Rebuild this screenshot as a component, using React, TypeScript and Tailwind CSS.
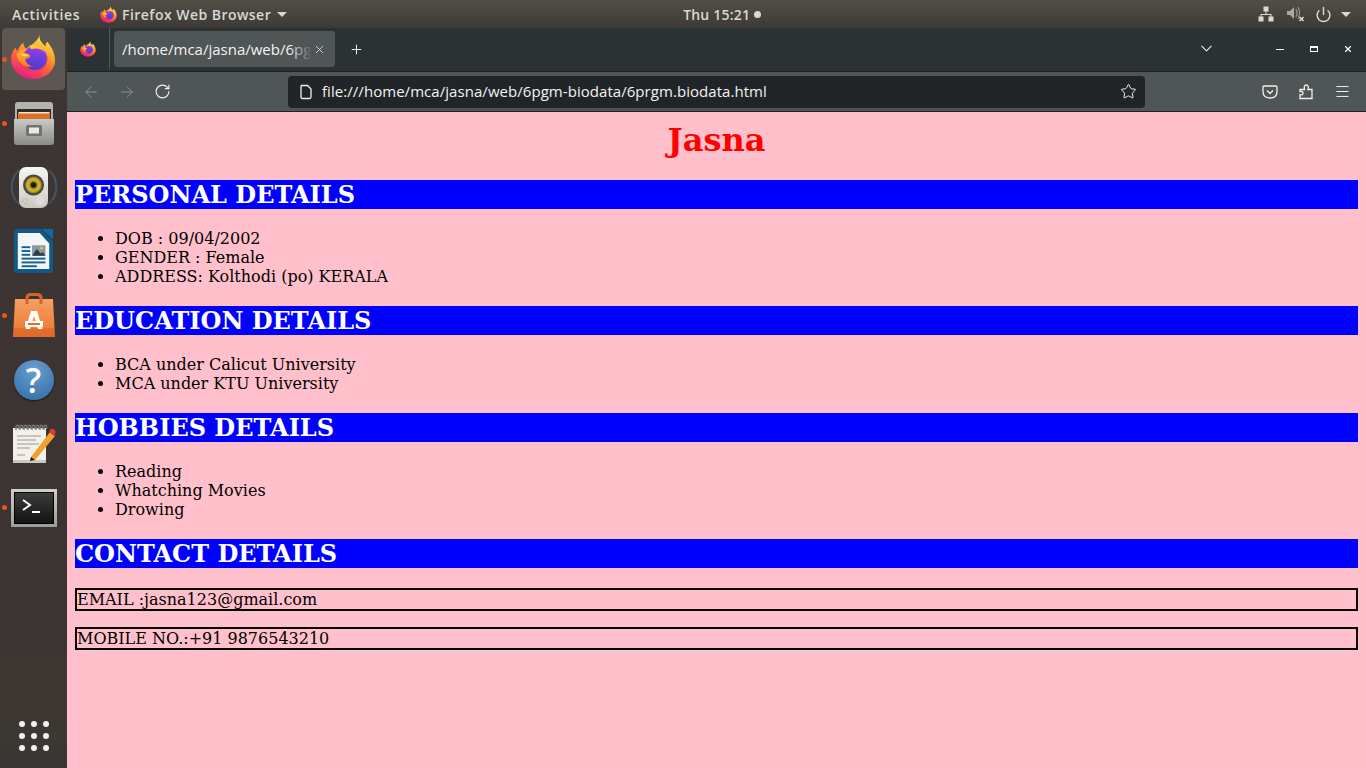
import React from "react";
import { ArrowLeft, ArrowRight, ChevronDown, Menu, Plus, Power, RotateCw, Star, X } from "lucide-react";

const uiFont = "font-['Open_Sans',sans-serif]";

function FirefoxLogo({ size, id }: { size: number; id: string }) {
    return (
        <svg width={size} height={size} viewBox="0 0 48 48">
            <defs>
                <linearGradient id={`${id}-body`} x1="0.75" y1="0" x2="0.3" y2="1">
                    <stop offset="0" stopColor="#ffe847" />
                    <stop offset="0.35" stopColor="#ffa52c" />
                    <stop offset="0.65" stopColor="#ff5a3c" />
                    <stop offset="1" stopColor="#e5178b" />
                </linearGradient>
                <linearGradient id={`${id}-globe`} x1="0.6" y1="0" x2="0.4" y2="1">
                    <stop offset="0" stopColor="#a83ae0" />
                    <stop offset="0.5" stopColor="#6b3fdc" />
                    <stop offset="1" stopColor="#4f3bc4" />
                </linearGradient>
                <linearGradient id={`${id}-fox`} x1="0" y1="0" x2="1" y2="1">
                    <stop offset="0" stopColor="#ffb52e" />
                    <stop offset="1" stopColor="#ff6a2f" />
                </linearGradient>
            </defs>
            <path
                d="M31 1C30 7 34 9 37 13C37 10 38 9 39 8C44 14 47 21 47 27C47 39 36 47 24 47C12 47 1 38 1 26C1 21 3 17 6 14C6 16 7 17 8 18C9 14 12 10 14 9C14 12 15 14 17 15C21 12 28 9 31 1Z"
                fill={`url(#${id}-body)`}
            />
            <path d="M39 22C41 31 35 40 25 40C16 40 10 34 9 27C13 35 21 38 28 36C35 34 39 29 39 22Z" fill="#f0346e" opacity="0.75" />
            <circle cx="26" cy="25" r="12.5" fill={`url(#${id}-globe)`} />
            <path d="M20 12C26 10 34 13 37 19C33 15 27 14 22 16Z" fill="#ffc933" />
            <path
                d="M7 21C11 17 15 15 18 16C16 18 15 19 15 20C18 20 21 21 21 23C21 25 18 26 16 26C16 29 19 33 24 34C18 35 11 32 9 27C8 25 7 23 7 21Z"
                fill={`url(#${id}-fox)`}
            />
            <path d="M11 21C14 20 18 21 19 22C17 24 14 24 11 21Z" fill="#ffd75e" />
        </svg>
    );
}

function FilesIcon() {
    return (
        <svg width="44" height="43" viewBox="0 0 44 43">
            <defs>
                <linearGradient id="cab" x1="0" y1="0" x2="0" y2="1">
                    <stop offset="0" stopColor="#c9c9c6" />
                    <stop offset="1" stopColor="#8a8a88" />
                </linearGradient>
            </defs>
            <path d="M3 3Q3 0 6 0H38Q41 0 41 3V20H3Z" fill="#b3b3b0" />
            <rect x="5" y="7" width="34" height="11" fill="#2e2a28" />
            <rect x="6" y="10" width="32" height="8" fill="#d96f2a" />
            <rect x="7" y="10" width="30" height="1.5" fill="#f8e6cc" />
            <path d="M2 17H42V40Q42 43 39 43H5Q2 43 2 40Z" fill="url(#cab)" />
            <rect x="14" y="23" width="16" height="11" rx="1.5" fill="#737371" />
            <rect x="17" y="25.5" width="10" height="6" fill="#e8e8e6" />
        </svg>
    );
}

function SpeakerIcon() {
    return (
        <svg width="50" height="44" viewBox="0 0 50 44">
            <defs>
                <radialGradient id="cone">
                    <stop offset="0" stopColor="#3a3320" />
                    <stop offset="0.3" stopColor="#8a7a1a" />
                    <stop offset="0.7" stopColor="#d8bd2c" />
                    <stop offset="1" stopColor="#7b6e22" />
                </radialGradient>
                <linearGradient id="spk" x1="0" y1="0" x2="0" y2="1">
                    <stop offset="0" stopColor="#f7f6f2" />
                    <stop offset="1" stopColor="#c9c8c2" />
                </linearGradient>
            </defs>
            <path d="M10 5C0 15 0 29 10 39" fill="none" stroke="#4f6f93" strokeWidth="2" opacity="0.4" />
            <path d="M40 5C50 15 50 29 40 39" fill="none" stroke="#4f6f93" strokeWidth="2" opacity="0.4" />
            <path d="M6 9C2 17 2 27 6 35" fill="none" stroke="#4f6f93" strokeWidth="2" opacity="0.28" />
            <path d="M44 9C48 17 48 27 44 35" fill="none" stroke="#4f6f93" strokeWidth="2" opacity="0.28" />
            <rect x="10" y="2" width="29" height="41" rx="7" fill="url(#spk)" />
            <circle cx="24.5" cy="20" r="10.5" fill="#4a473f" />
            <circle cx="24.5" cy="20" r="8.5" fill="url(#cone)" />
            <circle cx="24.5" cy="20" r="2.8" fill="#1f1c14" />
            <circle cx="31" cy="36" r="4.5" fill="#dcdbd5" />
            <circle cx="16" cy="36" r="2.5" fill="none" stroke="#bdbcb6" />
        </svg>
    );
}

function WriterIcon() {
    return (
        <svg width="40" height="48" viewBox="0 0 42 48">
            <path d="M3 1H28L41 14V44Q41 47 38 47H3Q0 47 0 44V4Q0 1 3 1Z" fill="#0f5a8a" />
            <path d="M4 5H27L37 16V43H4Z" fill="#f3f5f6" />
            <path d="M29 1H40Q41 1 41 2V12Z" fill="#0f6aa4" />
            <g fill="#145f92">
                <rect x="8" y="19" width="9" height="2" />
                <rect x="8" y="23" width="9" height="2" />
                <rect x="8" y="27" width="9" height="2" />
                <rect x="8" y="31" width="25" height="2" />
                <rect x="8" y="35" width="25" height="2" />
                <rect x="8" y="39" width="16" height="2" />
            </g>
            <rect x="19" y="18" width="14" height="11" fill="#8a98a2" />
            <path d="M19 29L24 22L28 27L30 25L33 29Z" fill="#2d3b44" />
            <circle cx="29" cy="21" r="1.5" fill="#f1c232" />
        </svg>
    );
}

function StoreIcon() {
    return (
        <svg width="42" height="44" viewBox="0 0 42 44">
            <defs>
                <linearGradient id="bag" x1="0" y1="0" x2="0" y2="1">
                    <stop offset="0" stopColor="#f4a063" />
                    <stop offset="0.75" stopColor="#ef7f3a" />
                    <stop offset="0.76" stopColor="#e56f2b" />
                    <stop offset="1" stopColor="#e0682a" />
                </linearGradient>
            </defs>
            <path d="M2 6H40L42 44H0Z" fill="url(#bag)" />
            <path d="M14 11V5Q14 1.500 18 1.500H24Q28 1.500 28 5V11" fill="none" stroke="#d8632f" strokeWidth="3" />
            <path d="M12.500 36L18 18H24L29.500 36H25L21 23L17 36Z" fill="#fff" />
            <rect x="12" y="28" width="18" height="6" fill="#fff" />
            <rect x="15" y="30" width="12" height="2" fill="#e56f2b" />
        </svg>
    );
}

function HelpIcon() {
    return (
        <div className="flex h-10 w-10 items-center justify-center rounded-full bg-[radial-gradient(circle_at_50%_25%,#6a9fd0,#2f6ba5)] shadow-[0_1px_2px_rgba(0,0,0,0.6)]">
            <span className="font-['Open_Sans',sans-serif] text-[34px] font-semibold leading-none text-white">?</span>
        </div>
    );
}

function NotesIcon() {
    return (
        <svg width="44" height="40" viewBox="0 0 44 40">
            <rect x="1" y="4" width="33" height="34" fill="#f1f0ea" />
            <rect x="1" y="36" width="33" height="3" fill="#c8c7c0" />
            <g fill="none" stroke="#77756f" strokeWidth="1.4">
                {[4, 8, 12, 16, 20, 24, 28, 32].map((x) => (
                    <path key={x} d={`M${x} 6V2.5a1.3 1.3 0 0 1 2.6 0V5`} />
                ))}
            </g>
            <g stroke="#9a9992" strokeWidth="1">
                <path d="M5 12H29M5 16H24M5 20H27M5 24H18M5 31H13" />
            </g>
            <path d="M19 33L38 8L43 12L23 36L18 37Z" fill="#f0a02c" />
            <path d="M37 8L39 5Q41 4 43 6Q44 8 43 10L42 12Z" fill="#d83c34" />
            <path d="M18 37L19 33L23 36Z" fill="#1f1f1f" />
        </svg>
    );
}

function TerminalIcon() {
    return (
        <div className="flex h-[38px] w-[46px] flex-col bg-gradient-to-b from-[#cfcfcc] to-[#9c9c98] p-[3px]">
            <div className="flex-1 border border-black bg-gradient-to-b from-[#3c3c3a] to-[#141414]">
                <svg className="block" width="38" height="30" viewBox="0 0 38 30">
                    <path d="M8 7L15 12L8 17" fill="none" stroke="#fff" strokeWidth="2" />
                    <rect x="17" y="18" width="8" height="2" fill="#fff" />
                </svg>
            </div>
        </div>
    );
}

function DockItem({ running, lift = "", children }: { running?: boolean; lift?: string; children: React.ReactNode }) {
    return (
        <div className="relative flex h-16 w-full items-center justify-center">
            {running && <div className="absolute left-[2px] top-[29px] h-[5px] w-[5px] rounded-full bg-[#e9541f]" />}
            <div className={lift}>{children}</div>
        </div>
    );
}

function Dock() {
    return (
        <div className="flex w-[67px] shrink-0 flex-col bg-[linear-gradient(180deg,#3d3533_0%,#3c3432_82%,#3f3733_88%,#393733_100%)]">
            <div className="relative flex h-16 w-full justify-center">
                <div className="mx-[2px] h-[62px] w-full rounded-[4px] bg-[#5d5752]" />
                <div className="absolute left-[2px] top-[29px] h-[5px] w-[5px] rounded-full bg-[#e9541f]" />
                <div className="absolute left-[10px] top-[6px]">
                    <FirefoxLogo size={46} id="dock" />
                </div>
            </div>
            <DockItem running lift="mb-[2px]"><FilesIcon /></DockItem>
            <DockItem lift="mb-[2px]"><SpeakerIcon /></DockItem>
            <DockItem lift="mb-[2px]"><WriterIcon /></DockItem>
            <DockItem running lift="mb-[2px]"><StoreIcon /></DockItem>
            <DockItem><HelpIcon /></DockItem>
            <DockItem><NotesIcon /></DockItem>
            <DockItem running><TerminalIcon /></DockItem>
            <div className="mt-auto mb-[17px] grid grid-cols-3 gap-[6px] self-center">
                {Array.from({ length: 9 }).map((_, i) => (
                    <div key={i} className="h-[6px] w-[6px] rounded-full bg-[#f2f2ef]" />
                ))}
            </div>
        </div>
    );
}

function TopBar() {
    return (
        <div className={`flex h-7 items-center bg-gradient-to-b from-[#524e47] to-[#3d3a37] text-[14px] font-semibold text-[#d8d8d4] ${uiFont}`}>
            <span className="ml-3 w-[88px] tracking-[0.7px]">Activities</span>
            <FirefoxLogo size={17} id="top" />
            <span className="ml-[5px] tracking-[0.47px]">Firefox Web Browser</span>
            <svg className="ml-[6px]" width="10" height="5" viewBox="0 0 10 5"><path d="M0 0H10L5 5Z" fill="#d8d8d4" /></svg>
            <div className="ml-[396px] flex items-center gap-1">
                <span className="tracking-[0.2px]">Thu 15:21</span>
                <span className="h-[7px] w-[7px] rounded-full bg-[#d8d8d4]" />
            </div>
            <div className="ml-auto mr-[15px] flex items-center">
                <svg width="16" height="16" viewBox="0 0 16 16" fill="#d8d8d4">
                    <rect x="5.5" y="0.5" width="5" height="5" />
                    <rect x="0.5" y="10.5" width="5" height="5" />
                    <rect x="10.5" y="10.5" width="5" height="5" />
                    <path d="M7.5 5H8.5V8H13.5V11H12.5V9H3.5V11H2.5V8H7.5Z" />
                </svg>
                <svg className="ml-[13px]" width="18" height="16" viewBox="0 0 18 16" fill="none">
                    <path d="M0 5H3L7 1V13L3 9H0Z" fill="#a9a8a3" />
                    <path d="M9 3Q11 7 9 11M11 1Q14 7 11 13" stroke="#8f8e89" strokeWidth="1.3" />
                    <path d="M12.500 11L16.500 15M16.500 11L12.500 15" stroke="#d8d8d4" strokeWidth="1.6" />
                </svg>
                <Power className="ml-[10px]" size={17} strokeWidth={2} color="#d8d8d4" />
                <svg className="ml-[9px]" width="10" height="5" viewBox="0 0 10 5"><path d="M0 0H10L5 5Z" fill="#d8d8d4" /></svg>
            </div>
        </div>
    );
}

function PocketIcon() {
    return (
        <svg width="16" height="16" viewBox="0 0 16 16" fill="none" stroke="#f0f0f0" strokeWidth="1.3">
            <path d="M2.3 2H13.7Q15 2 15 3.3V7.5Q15 14 8 14Q1 14 1 7.5V3.3Q1 2 2.3 2Z" />
            <path d="M5 6.5L8 9.5L11 6.5" />
        </svg>
    );
}

function PuzzleIcon() {
    return (
        <svg width="16" height="16" viewBox="0 0 16 16" fill="none" stroke="#f0f0f0" strokeWidth="1.3">
            <path d="M2 5.500H6.500Q5.500 1 8.500 1Q11 1 10 5.500H14V14.500H2V10.500Q5 11.500 5 9Q5 7 2 7.500Z" />
        </svg>
    );
}

function Browser() {
    return (
        <div className={`flex flex-col ${uiFont}`}>
            <div className="flex h-[43px] items-start bg-[#2c3134]">
                <div className="flex h-[41px] w-[43px] items-center justify-center border-r border-[#54595c]">
                    <FirefoxLogo size={16} id="tabbar" />
                </div>
                <div className="relative ml-1 mt-[3px] flex h-9 w-[221px] items-center overflow-hidden rounded-[4px] bg-[#505556] pl-2 text-[15px] text-[#f2f2f2]">
                    <span className="whitespace-nowrap">/home/mca/jasna/web/6pgm</span>
                    <div className="absolute inset-y-0 right-0 flex w-[46px] items-center justify-end bg-gradient-to-r from-transparent via-[#505556] to-[#505556] pr-[9px]">
                        <X size={13} strokeWidth={1.5} color="#e8e8e8" />
                    </div>
                </div>
                <Plus className="ml-[14px] mt-[14px]" size={15} strokeWidth={1.6} color="#f2f2f2" />
                <ChevronDown className="ml-auto mt-[11px]" size={19} strokeWidth={1.4} color="#e8e8e8" />
                <div className="ml-[60px] mr-[15px] mt-[18px] flex h-[6px] items-center">
                    <div className="h-px w-2 bg-white" />
                    <div className="ml-[26px] h-[6px] w-2 border border-t-2 border-white" />
                    <svg className="ml-[27px]" width="6" height="6" viewBox="0 0 6 6" stroke="#fff" strokeWidth="1.3"><path d="M0 0L6 6M6 0L0 6" /></svg>
                </div>
            </div>
            <div className="flex h-[41px] items-center border-y border-[#1e2224] bg-[#505556]">
                <ArrowLeft className="ml-[15px]" size={18} strokeWidth={1.3} color="#8b8f90" />
                <ArrowRight className="ml-[18px]" size={18} strokeWidth={1.3} color="#8b8f90" />
                <RotateCw className="ml-[18px]" size={17} strokeWidth={1.6} color="#f0f0f0" />
                <div className="ml-[117px] flex h-8 w-[857px] items-center rounded-[4px] bg-[#212528] pl-[11px] pr-2 text-[15px] text-[#f2f2f2]">
                    <svg width="14" height="16" viewBox="0 0 14 16" fill="none" stroke="#f0f0f0" strokeWidth="1.3">
                        <path d="M2.500 1.500H8.500L12 5V13Q12 14.500 10.500 14.500H3.500Q2 14.500 2 13V2Z" />
                    </svg>
                    <span className="ml-[9px] tracking-[0.05px]">file:///home/mca/jasna/web/6pgm-biodata/6prgm.biodata.html</span>
                    <Star className="ml-auto" size={17} strokeWidth={1.4} color="#f0f0f0" />
                </div>
                <div className="ml-auto mr-[15px] flex items-center gap-[20px]">
                    <PocketIcon />
                    <PuzzleIcon />
                    <Menu size={17} strokeWidth={1.4} color="#f0f0f0" />
                </div>
            </div>
        </div>
    );
}

function Section({ title }: { title: string }) {
    return <h2 className="mb-5 h-[29px] bg-[#0000ff] text-[24px] font-bold leading-[29px] text-white">{title}</h2>;
}

function Bullets({ items }: { items: string[] }) {
    return (
        <ul className="mb-5 list-disc pl-10 text-[16px] leading-[19px]">
            {items.map((item) => (
                <li key={item}>{item}</li>
            ))}
        </ul>
    );
}

function Page() {
    return (
        <div className="flex-1 bg-[#ffc0cb] px-2 pt-[10px] font-['DejaVu_Serif',serif] text-black">
            <h1 className="mb-[21px] text-center text-[32px] font-bold leading-[37px] text-[#ff0000]">Jasna</h1>
            <Section title="PERSONAL DETAILS" />
            <Bullets items={["DOB : 09/04/2002", "GENDER : Female", "ADDRESS: Kolthodi (po) KERALA"]} />
            <Section title="EDUCATION DETAILS" />
            <Bullets items={["BCA under Calicut University", "MCA under KTU University"]} />
            <Section title="HOBBIES DETAILS" />
            <Bullets items={["Reading", "Whatching Movies", "Drowing"]} />
            <Section title="CONTACT DETAILS" />
            <p className="mb-4 border-2 border-black text-[16px] leading-[19px]">EMAIL :jasna123@gmail.com</p>
            <p className="border-2 border-black text-[16px] leading-[19px]">MOBILE NO.:+91 9876543210</p>
        </div>
    );
}

export default function App() {
    return (
        <div className="flex h-[768px] w-[1366px] flex-col overflow-hidden">
            <TopBar />
            <div className="flex min-h-0 flex-1">
                <Dock />
                <div className="flex min-w-0 flex-1 flex-col">
                    <Browser />
                    <Page />
                </div>
            </div>
        </div>
    );
}
